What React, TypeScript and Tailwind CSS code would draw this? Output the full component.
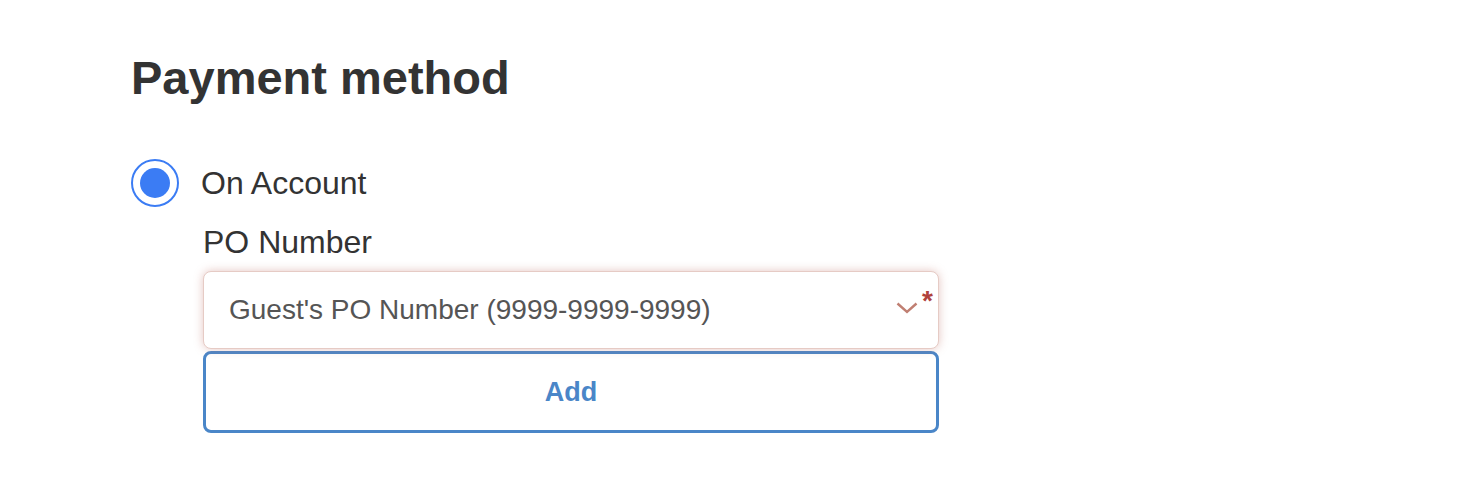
export default function App() {
  return (
    <div className="min-h-screen bg-white pl-[131px] pt-[52px] font-['Liberation_Sans',Arial,sans-serif]">
      <h2 className="text-[47px] leading-[52px] font-bold text-[#333]">Payment method</h2>

      <label className="mt-[55px] flex items-center gap-[22px] cursor-pointer">
        <span className="w-[48px] h-[48px] rounded-full border-2 border-[#3b7cf4] flex items-center justify-center shrink-0">
          <span className="w-[30px] h-[30px] rounded-full bg-[#3b7cf4]" />
        </span>
        <span className="text-[32px] leading-[40px] text-[#333]">On Account</span>
      </label>

      <div className="ml-[72px] w-[736px]">
        <p className="mt-[17px] text-[32px] leading-[36px] text-[#333]">PO Number</p>

        <div className="relative z-10 mt-[11px] h-[78px] rounded-[8px] border border-[#e6cbc5] bg-white shadow-[0_0_10px_rgba(190,110,100,0.4)] flex items-center pl-[25px]">
          <span className="text-[28px] text-[#555]">Guest's PO Number (9999-9999-9999)</span>
          <svg className="absolute right-[20px] top-[30px]" width="22" height="12" viewBox="0 0 22 12" fill="none">
            <polyline points="1.5,1.5 11,10 20.5,1.5" stroke="#c07f72" strokeWidth="2.4" />
          </svg>
          <span className="absolute right-[5px] top-[15px] text-[28px] leading-[28px] font-bold text-[#b0423b]">*</span>
        </div>

        <button className="mt-[2px] w-full h-[82px] rounded-[8px] border-[3px] border-[#4a86c8] bg-white text-[27px] font-bold text-[#4a86c8]">
          Add
        </button>
      </div>
    </div>
  );
}
